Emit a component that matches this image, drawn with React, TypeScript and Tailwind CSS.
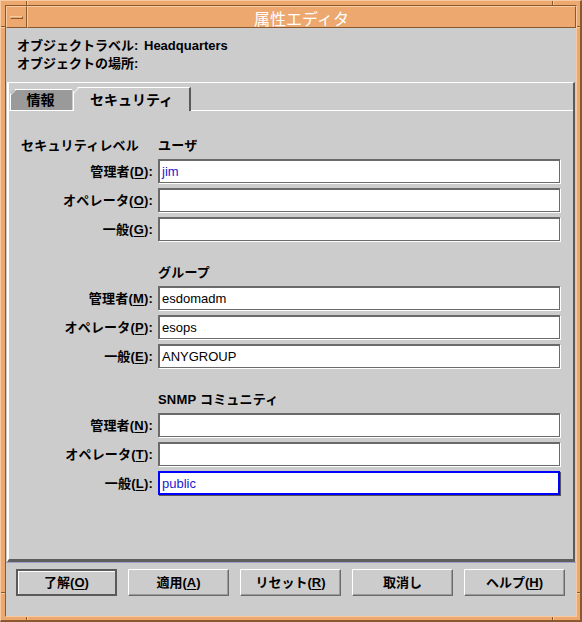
import React from 'react';

type Row = { label: string; key: string; value?: string; blue?: boolean; focus?: boolean };
type Group = { side?: string; heading: string; rows: Row[] };

const GROUPS: Group[] = [
  {
    side: 'セキュリティレベル',
    heading: 'ユーザ',
    rows: [
      { label: '管理者', key: 'D', value: 'jim', blue: true },
      { label: 'オペレータ', key: 'O' },
      { label: '一般', key: 'G' },
    ],
  },
  {
    heading: 'グループ',
    rows: [
      { label: '管理者', key: 'M', value: 'esdomadm' },
      { label: 'オペレータ', key: 'P', value: 'esops' },
      { label: '一般', key: 'E', value: 'ANYGROUP' },
    ],
  },
  {
    heading: 'SNMP コミュニティ',
    rows: [
      { label: '管理者', key: 'N' },
      { label: 'オペレータ', key: 'T' },
      { label: '一般', key: 'L', value: 'public', blue: true, focus: true },
    ],
  },
];

const BUTTONS: { label: string; key?: string; primary?: boolean }[] = [
  { label: '了解', key: 'O', primary: true },
  { label: '適用', key: 'A' },
  { label: 'リセット', key: 'R' },
  { label: '取消し' },
  { label: 'ヘルプ', key: 'H' },
];

function Mnemonic({ k }: { k: string }) {
  return (
    <span>
      (<span className="underline underline-offset-[2px]">{k}</span>)
    </span>
  );
}

function Field({ row }: { row: Row }) {
  return (
    <div className="mt-[5px] flex h-[24px] items-center">
      <div className="w-[144px] text-right text-[13px] font-bold leading-none tracking-[0.2px] text-black">
        {row.label}
        <Mnemonic k={row.key} />:
      </div>
      <div
        className={
          row.focus
            ? 'ml-[5px] flex h-[24px] w-[402px] items-center border-2 border-[#0000ff] bg-white pl-[2px] shadow-[1px_1px_0_#555]'
            : 'ml-[5px] flex h-[24px] w-[402px] items-center border-t-2 border-l-2 border-r border-b border-[#6a6a6a] bg-white pl-[2px] shadow-[1px_1px_0_#ffffff]'
        }
      >
        <span
          className={`font-['Liberation_Sans',sans-serif] text-[13px] font-normal leading-none ${
            row.blue ? 'text-[#1a1ad0]' : 'text-black'
          }`}
        >
          {row.value ?? ''}
        </span>
      </div>
    </div>
  );
}

export default function App() {
  return (
    <div className="relative h-[622px] w-[582px] overflow-hidden border-t border-l border-[#f8caa2] border-r-2 border-b-2 border-r-[#8a5a2e] border-b-[#8a5a2e] bg-[#eda86f] font-['Liberation_Sans','Noto_Sans_CJK_JP',sans-serif] text-black">
      {/* frame resize notches */}
      <div className="absolute left-[25px] top-0 h-[5px] w-[2px] border-l border-[#8a5a2e] border-r border-r-[#f8caa2]" />
      <div className="absolute left-[551px] top-0 h-[5px] w-[2px] border-l border-[#8a5a2e] border-r border-r-[#f8caa2]" />
      <div className="absolute bottom-0 left-[25px] h-[5px] w-[2px] border-l border-[#8a5a2e] border-r border-r-[#f8caa2]" />
      <div className="absolute bottom-0 left-[551px] h-[5px] w-[2px] border-l border-[#8a5a2e] border-r border-r-[#f8caa2]" />
      <div className="absolute left-0 top-[25px] h-[2px] w-[5px] border-t border-[#8a5a2e] border-b border-b-[#f8caa2]" />
      <div className="absolute left-0 top-[591px] h-[2px] w-[5px] border-t border-[#8a5a2e] border-b border-b-[#f8caa2]" />
      <div className="absolute right-0 top-[25px] h-[2px] w-[5px] border-t border-[#8a5a2e] border-b border-b-[#f8caa2]" />
      <div className="absolute right-0 top-[591px] h-[2px] w-[5px] border-t border-[#8a5a2e] border-b border-b-[#f8caa2]" />

      <div className="absolute left-[4px] top-[4px] flex h-[612px] w-[572px] flex-col border-t border-l border-[#8a5a2e] border-r border-b border-r-[#f8caa2] border-b-[#f8caa2]">
        {/* title bar */}
        <div className="flex h-[22px] shrink-0">
          <div className="flex h-[22px] w-[21px] items-center justify-center border-t border-l border-[#f8caa2] border-r border-b border-r-[#8a5a2e] border-b-[#8a5a2e] bg-[#eda86f]">
            <div className="h-[3px] w-[13px] border-t border-l border-[#f8caa2] border-b border-r border-b-[#8a5a2e] border-r-[#8a5a2e]" />
          </div>
          <div className="flex h-[22px] flex-1 items-center justify-center border-t border-l border-[#f8caa2] border-r border-b border-r-[#8a5a2e] border-b-[#8a5a2e] bg-[#eda86f] pt-[1px]">
            <span className="font-['Noto_Sans_CJK_JP',sans-serif] text-[16px] font-normal leading-none text-white">
              属性エディタ
            </span>
          </div>
        </div>

        {/* body */}
        <div className="flex flex-1 flex-col bg-[#cccccc]">
          <div className="h-[54px] shrink-0 pl-[11px] pt-[8px] text-[13px] font-bold">
            <div className="flex h-[18px] items-center leading-none">
              <span className="w-[127px]">オブジェクトラベル:</span>
              <span>Headquarters</span>
            </div>
            <div className="flex h-[18px] items-center leading-none">
              <span>オブジェクトの場所:</span>
            </div>
          </div>

          {/* tab box */}
          <div className="ml-[1px] mr-[1px] flex flex-1 flex-col border-t border-t-white border-l-2 border-l-white border-r-2 border-r-[#5a5a5a] border-b-[3px] border-b-[#5e5e5e]">
            <div className="flex h-[27px] shrink-0 items-end pl-[1px]">
              <div className="relative flex h-[21px] w-[62px] items-center justify-center border-t border-l border-white bg-[#9a9a9a] pr-[2px] text-[14px] font-bold leading-none [clip-path:polygon(5px_0,100%_0,100%_100%,0_100%,0_5px)]">
                <svg className="absolute left-[-1px] top-[-1px]" width="7" height="7" viewBox="0 0 7 7">
                  <line x1="0.5" y1="6" x2="6" y2="0.5" stroke="#ffffff" strokeWidth="1" />
                </svg>
                情報
              </div>
              <div className="relative z-10 -mb-[1px] ml-[1px] flex h-[24px] w-[118px] items-center justify-center border-t border-l border-white border-r-2 border-r-[#5a5a5a] bg-[#cccccc] text-[14px] font-bold leading-none [clip-path:polygon(5px_0,100%_0,100%_100%,0_100%,0_5px)]">
                <svg className="absolute left-[-1px] top-[-1px]" width="7" height="7" viewBox="0 0 7 7">
                  <line x1="0.5" y1="6" x2="6" y2="0.5" stroke="#ffffff" strokeWidth="1" />
                </svg>
                セキュリティ
              </div>
            </div>
            <div className="flex flex-1 flex-col border-t border-white pt-[3px]">
              {GROUPS.map((g) => (
                <div key={g.heading} className="mt-[22px]">
                  <div className="flex h-[18px] items-center text-[13px] font-bold leading-none tracking-[0.2px]">
                    <div className="w-[144px] pl-[12px]">{g.side ?? ''}</div>
                    <div className="ml-[5px]">{g.heading}</div>
                  </div>
                  {g.rows.map((r) => (
                    <Field key={r.label + r.key} row={r} />
                  ))}
                </div>
              ))}
            </div>
          </div>
          <div className="h-[1px] shrink-0 bg-[#a0a0c8]" />

          {/* buttons */}
          <div className="flex h-[53px] shrink-0 gap-[11px] pl-[10px] pt-[6px]">
            {BUTTONS.map((b) => (
              <div
                key={b.label}
                className={
                  b.primary
                    ? 'flex h-[27px] w-[101px] items-center justify-center border-2 border-[#5a5a5a] bg-[#cccccc] text-[13px] font-bold leading-none shadow-[inset_1px_1px_0_#ffffff]'
                    : 'flex h-[27px] w-[101px] items-center justify-center border-t border-l border-white border-r border-b border-r-[#6a6a6a] border-b-[#6a6a6a] bg-[#cccccc] text-[13px] font-bold leading-none shadow-[inset_-1px_-1px_0_#9a9a9a]'
                }
              >
                {b.label}
                {b.key ? <Mnemonic k={b.key} /> : null}
              </div>
            ))}
          </div>
        </div>
      </div>
    </div>
  );
}
